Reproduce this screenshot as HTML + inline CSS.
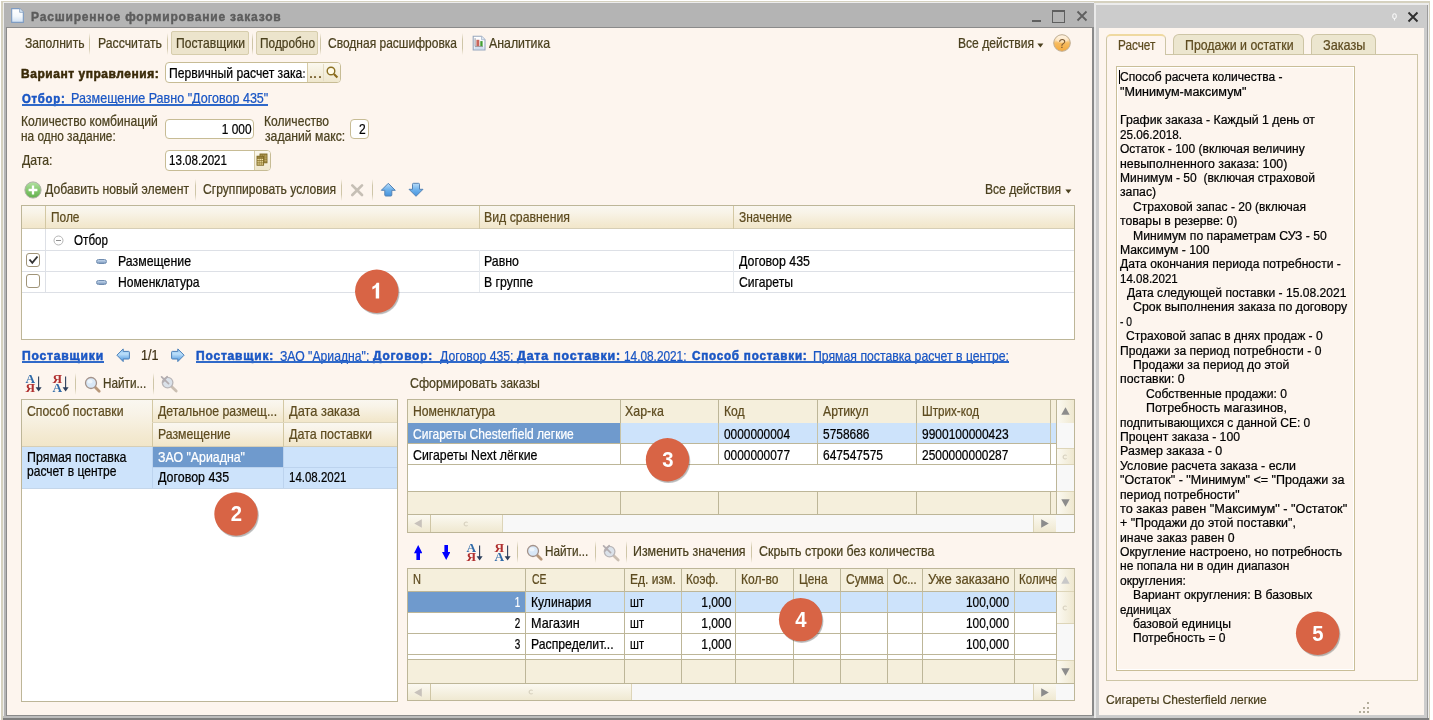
<!DOCTYPE html>
<html><head><meta charset="utf-8"><title>1C</title><style>
html,body{margin:0;padding:0;}
body{width:1433px;height:720px;position:relative;overflow:hidden;background:#fff;font-family:"Liberation Sans",sans-serif;font-size:13px;}
div,span,svg{position:absolute;box-sizing:border-box;}
span{white-space:pre;-webkit-text-stroke:0.22px currentColor;}
</style></head><body>
<div style="left:0;top:0;width:1433px;height:720px;will-change:transform;overflow:hidden">
<div style="left:0px;top:0px;width:1433px;height:720px;background:#fff"></div>
<div style="left:1px;top:1px;width:1429px;height:719px;background:#d5d1bf"></div>
<div style="left:3px;top:2px;width:1091px;height:718px;background:#ececec"></div>
<div style="left:1094px;top:3px;width:334.5px;height:717px;background:#ececec"></div>
<div style="left:4px;top:3px;width:1090px;height:715px;background:#b4b4b4"></div>
<div style="left:1094px;top:3px;width:2px;height:715px;background:#e9e9e9"></div>
<div style="left:1096px;top:5px;width:331.2px;height:713px;background:#cccccc"></div>
<div style="left:1427.2px;top:5px;width:1.3px;height:713px;background:#9c9c9c"></div>
<div style="left:3px;top:718px;width:1425.5px;height:2px;background:#7f7f7f"></div>
<div style="left:3px;top:716px;width:1091px;height:2px;background:#bdbdbd"></div>
<div style="left:6px;top:27px;width:1088px;height:689px;background:#8a8a8a"></div>
<div style="left:7px;top:28px;width:1085px;height:687px;background:#fdf5ee"></div>
<div style="left:1099px;top:28px;width:325px;height:687px;background:#fdf5ee"></div>
<svg style="left:9.7px;top:7px" width="15" height="17" viewBox="0 0 14 16">
<defs><linearGradient id="dg" x1="0" y1="0" x2="0" y2="1"><stop offset="0" stop-color="#ffffff"/><stop offset="0.55" stop-color="#f4f8fc"/><stop offset="1" stop-color="#cfe0f3"/></linearGradient></defs>
<path d="M1.5 1.5 H9 L12.5 5 V14.5 H1.5 Z" fill="url(#dg)" stroke="#7f9cc2" stroke-width="1.1"/>
<path d="M9 1.5 V5 H12.5" fill="#dbe8f6" stroke="#8aa5c4" stroke-width="0.8"/>
</svg>
<span style="top:10.03px;font-size:12px;line-height:15px;color:#5c5c5c;font-weight:bold;letter-spacing:0.8px;left:31px;transform:scale(1.0021,1.05);transform-origin:0 11.47px;-webkit-text-stroke:0.4px currentColor;">Расширенное формирование заказов</span>
<div style="left:1032px;top:20px;width:9px;height:2px;background:#5f5f5f"></div>
<div style="left:1052px;top:10px;width:13px;height:13px;border:1px solid #5f5f5f;border-top-width:2px"></div>
<svg style="left:1076px;top:10px" width="12" height="12" viewBox="0 0 12 12"><path d="M1.5 1.5 L10.5 10.5 M10.5 1.5 L1.5 10.5" stroke="#5f5f5f" stroke-width="1.8" fill="none"/></svg>
<svg style="left:1391.5px;top:12.5px" width="5" height="8.4" viewBox="0 0 6 10"><rect x="1" y="1" width="4" height="5.5" rx="1.5" fill="none" stroke="#fff" stroke-width="1.2"/><path d="M3 7 V9" stroke="#fff" stroke-width="1"/></svg>
<svg style="left:1407px;top:11px" width="12" height="12" viewBox="0 0 12 12"><path d="M1.5 1.5 L10.5 10.5 M10.5 1.5 L1.5 10.5" stroke="#2f2f2f" stroke-width="1.9" fill="none"/></svg>
<span style="top:35.9px;font-size:13px;line-height:16px;color:#4b411f;left:24.5px;transform:scale(0.9322,1.09);transform-origin:0 12.3px;">Заполнить</span>
<div style="left:89px;top:33px;width:1px;height:22px;background:linear-gradient(rgba(207,198,168,0),#cfc6a8 30%,#cfc6a8 70%,rgba(207,198,168,0))"></div>
<span style="top:35.9px;font-size:13px;line-height:16px;color:#4b411f;left:97.5px;transform:scale(0.9433,1.09);transform-origin:0 12.3px;">Рассчитать</span>
<div style="left:167px;top:33px;width:1px;height:22px;background:linear-gradient(rgba(207,198,168,0),#cfc6a8 30%,#cfc6a8 70%,rgba(207,198,168,0))"></div>
<div style="left:171px;top:31px;width:78px;height:24px;background:#ece4cc;border:1px solid #d6cdac;border-radius:2px"></div>
<span style="top:35.9px;font-size:13px;line-height:16px;color:#4b411f;left:176px;transform:scale(0.9332,1.09);transform-origin:0 12.3px;">Поставщики</span>
<div style="left:252px;top:33px;width:1px;height:22px;background:linear-gradient(rgba(207,198,168,0),#cfc6a8 30%,#cfc6a8 70%,rgba(207,198,168,0))"></div>
<div style="left:255.6px;top:31px;width:62.2px;height:24px;background:#ece4cc;border:1px solid #d6cdac;border-radius:2px"></div>
<span style="top:35.9px;font-size:13px;line-height:16px;color:#4b411f;left:260px;transform:scale(0.9136,1.09);transform-origin:0 12.3px;">Подробно</span>
<div style="left:320px;top:33px;width:1px;height:22px;background:linear-gradient(rgba(207,198,168,0),#cfc6a8 30%,#cfc6a8 70%,rgba(207,198,168,0))"></div>
<span style="top:35.9px;font-size:13px;line-height:16px;color:#4b411f;left:328px;transform:scale(0.9237,1.09);transform-origin:0 12.3px;">Сводная расшифровка</span>
<div style="left:462.3px;top:33px;width:1px;height:22px;background:linear-gradient(rgba(207,198,168,0),#cfc6a8 30%,#cfc6a8 70%,rgba(207,198,168,0))"></div>
<svg style="left:471.5px;top:35.3px" width="14" height="16" viewBox="0 0 14 16">
<defs><linearGradient id="ag" x1="0" y1="0" x2="0" y2="1"><stop offset="0" stop-color="#ffffff"/><stop offset="0.7" stop-color="#f3f7fc"/><stop offset="1" stop-color="#d6e3f3"/></linearGradient></defs>
<path d="M1.2 1.2 H9.5 L13 4.7 V15 H1.2 Z" fill="url(#ag)" stroke="#98a7bd" stroke-width="1.1"/>
<path d="M9.5 1.2 V4.7 H13" fill="#dfe8f4" stroke="#a9b7cb" stroke-width="0.8"/>
<path d="M3.1 3.2 V11.4 H11" fill="none" stroke="#8d8d95" stroke-width="0.9"/>
<rect x="4.4" y="4.8" width="2.9" height="6.3" fill="#c9665c"/>
<rect x="8.3" y="6.1" width="2.3" height="5" fill="#42a030"/>
<path d="M3 13 H11.5" stroke="#bfd0e6" stroke-width="1"/></svg>
<span style="top:35.9px;font-size:13px;line-height:16px;color:#4b411f;left:489px;transform:scale(0.9478,1.09);transform-origin:0 12.3px;">Аналитика</span>
<span style="top:35.9px;font-size:13px;line-height:16px;color:#4b411f;left:957.5px;transform:scale(0.9295,1.09);transform-origin:0 12.3px;">Все действия</span>
<svg style="left:1037.3px;top:42.6px" width="7" height="5" viewBox="0 0 7 5"><path d="M0.4 0.4 H6.4 L3.4 4.4 Z" fill="#4b411f"/></svg>
<svg style="left:1052.2px;top:33.1px" width="20" height="20" viewBox="0 0 20 20">
<defs><linearGradient id="hg" x1="0" y1="0" x2="0" y2="1"><stop offset="0" stop-color="#fff0dc"/><stop offset="0.35" stop-color="#fbd9a4"/><stop offset="0.5" stop-color="#f7bc60"/><stop offset="1" stop-color="#f3a93e"/></linearGradient></defs>
<circle cx="10" cy="10" r="8.3" fill="url(#hg)" stroke="#bfae94" stroke-width="1"/>
<ellipse cx="10" cy="6.3" rx="5.8" ry="3.6" fill="#fff" opacity="0.35"/>
<text x="10" y="14.6" font-family="Liberation Sans" font-size="13" text-anchor="middle" fill="#7d5a32">?</text></svg>
<span style="top:66.93px;font-size:12px;line-height:15px;color:#3a2a08;font-weight:bold;letter-spacing:0.55px;left:21px;transform:scale(0.9982,1.03);transform-origin:0 11.47px;-webkit-text-stroke:0.5px currentColor;">Вариант управления:</span>
<div style="left:165px;top:62.4px;width:176px;height:20.4px;background:#fff;border:1px solid #c7bc95;border-radius:4px"></div>
<span style="top:66.2px;font-size:13px;line-height:16px;color:#000;left:168.7px;transform:scale(0.9354,1.09);transform-origin:0 12.3px;">Первичный расчет зака</span>
<div style="left:303.3px;top:71px;width:1.6px;height:1.8px;background:#8a8a8a"></div>
<div style="left:303.3px;top:75.8px;width:1.6px;height:2px;background:#8a8a8a"></div>
<div style="left:307px;top:63.4px;width:33px;height:18.4px;background:linear-gradient(#fbf8ee,#efe7cd);border-left:1px solid #d6cba6;border-radius:0 3px 3px 0"></div>
<div style="left:309.8px;top:76.3px;width:2.2px;height:2.2px;background:#7d6636;border-radius:0.6px"></div>
<div style="left:314.3px;top:76.3px;width:2.2px;height:2.2px;background:#7d6636;border-radius:0.6px"></div>
<div style="left:318.8px;top:76.3px;width:2.2px;height:2.2px;background:#7d6636;border-radius:0.6px"></div>
<div style="left:323.3px;top:64px;width:1px;height:17px;background:#e4dcc4"></div>
<svg style="left:325px;top:65px" width="15" height="15" viewBox="0 0 15 15"><circle cx="6" cy="6" r="3.8" fill="#fffbe8" stroke="#8a6f22" stroke-width="1.4"/><path d="M8.9 8.9 L12.4 12.4" stroke="#8a6a1c" stroke-width="2.1"/></svg>
<span style="top:91.53px;font-size:12px;line-height:15px;color:#1a56c4;font-weight:bold;letter-spacing:0.8px;left:22px;transform:scale(0.9437,1.03);transform-origin:0 11.47px;-webkit-text-stroke:0.5px currentColor;">Отбор:</span>
<span style="top:90.8px;font-size:13px;line-height:16px;color:#1a56c4;left:70.7px;transform:scale(0.9646,1.09);transform-origin:0 12.3px;">Размещение Равно "Договор 435"</span>
<div style="left:21.5px;top:104.1px;width:246.5px;height:1.5px;background:#2f69c9"></div>
<span style="top:114.4px;font-size:13px;line-height:16px;color:#4b411f;left:21px;transform:scale(0.9339,1.09);transform-origin:0 12.3px;">Количество комбинаций</span>
<span style="top:128.6px;font-size:13px;line-height:16px;color:#4b411f;left:21px;transform:scale(0.9117,1.09);transform-origin:0 12.3px;">на одно задание:</span>
<div style="left:165px;top:119.3px;width:89px;height:20px;background:#fff;border:1px solid #c7bc95;border-radius:4px"></div>
<span style="top:122.3px;font-size:13px;line-height:16px;color:#000;right:1181.2px;transform:scale(0.9156,1.09);transform-origin:100% 12.3px;">1 000</span>
<span style="top:114.4px;font-size:13px;line-height:16px;color:#4b411f;left:264.2px;transform:scale(0.9311,1.09);transform-origin:0 12.3px;">Количество</span>
<span style="top:128.7px;font-size:13px;line-height:16px;color:#4b411f;left:264.6px;transform:scale(0.9387,1.09);transform-origin:0 12.3px;">заданий макс:</span>
<div style="left:350px;top:119.3px;width:18.5px;height:20px;background:#fff;border:1px solid #c7bc95;border-radius:4px"></div>
<span style="top:122.3px;font-size:13px;line-height:16px;color:#000;left:359.3px;transform:scale(0.9261,1.09);transform-origin:0 12.3px;">2</span>
<span style="top:153.4px;font-size:13px;line-height:16px;color:#4b411f;left:21.5px;transform:scale(0.9412,1.09);transform-origin:0 12.3px;">Дата:</span>
<div style="left:165px;top:150.3px;width:105.5px;height:20.4px;background:#fff;border:1px solid #c7bc95;border-radius:4px"></div>
<span style="top:153.3px;font-size:13px;line-height:16px;color:#000;left:168.7px;transform:scale(0.8912,1.09);transform-origin:0 12.3px;">13.08.2021</span>
<div style="left:254px;top:151.3px;width:15.5px;height:18.4px;background:linear-gradient(#fbf8ee,#efe7cd);border-left:1px solid #d6cba6;border-radius:0 3px 3px 0"></div>
<svg style="left:256.2px;top:153px" width="12" height="13" viewBox="0 0 12 13">
<rect x="4" y="1" width="7" height="8.8" fill="#a8924e" stroke="#7d671f" stroke-width="0.9"/>
<path d="M4.5 3 H10.5 M4.5 5.2 H10.5 M4.5 7.4 H10.5" stroke="#c9b66e" stroke-width="0.9"/>
<path d="M6.4 1.3 V9.5 M8.7 1.3 V9.5" stroke="#8d7730" stroke-width="0.7"/>
<rect x="1" y="3.2" width="6.6" height="9" fill="#9c8540" stroke="#7d671f" stroke-width="0.9"/>
<path d="M1.5 6.6 H7.1 M1.5 8.8 H7.1 M1.5 11 H7.1" stroke="#fff3b8" stroke-width="1"/>
<path d="M3.2 3.6 V12 M5.4 3.6 V12" stroke="#8d7730" stroke-width="0.6"/></svg>
<svg style="left:23.5px;top:180.8px" width="18" height="18" viewBox="0 0 18 18">
<defs><linearGradient id="gg" x1="0" y1="0" x2="0" y2="1"><stop offset="0" stop-color="#b4e2a4"/><stop offset="0.5" stop-color="#86c870"/><stop offset="1" stop-color="#62b04c"/></linearGradient></defs>
<circle cx="9" cy="9" r="8.1" fill="url(#gg)" stroke="#aeb0a6" stroke-width="1"/>
<path d="M9 4.6 V13.4 M4.6 9 H13.4" stroke="#fff" stroke-width="2.3"/></svg>
<span style="top:182.0px;font-size:13px;line-height:16px;color:#4b411f;left:45px;transform:scale(0.9408,1.09);transform-origin:0 12.3px;">Добавить новый элемент</span>
<div style="left:195px;top:179px;width:1px;height:22px;background:linear-gradient(rgba(207,198,168,0),#cfc6a8 30%,#cfc6a8 70%,rgba(207,198,168,0))"></div>
<span style="top:182.0px;font-size:13px;line-height:16px;color:#4b411f;left:203px;transform:scale(0.9327,1.09);transform-origin:0 12.3px;">Сгруппировать условия</span>
<div style="left:341px;top:179px;width:1px;height:22px;background:linear-gradient(rgba(207,198,168,0),#cfc6a8 30%,#cfc6a8 70%,rgba(207,198,168,0))"></div>
<svg style="left:350px;top:183px" width="15" height="15" viewBox="0 0 15 15"><path d="M2.3 2.4 L12 12 M12 2.4 L2.3 12" stroke="#c6bfb5" stroke-width="2.7" stroke-linecap="round"/></svg>
<div style="left:372px;top:179px;width:1px;height:22px;background:linear-gradient(rgba(207,198,168,0),#cfc6a8 30%,#cfc6a8 70%,rgba(207,198,168,0))"></div>
<svg style="left:380px;top:182px" width="17" height="16" viewBox="0 0 17 16"><defs><linearGradient id="ab" x1="0" y1="0" x2="0" y2="1"><stop offset="0" stop-color="#b9dcf8"/><stop offset="0.5" stop-color="#6eb2ec"/><stop offset="1" stop-color="#4592dc"/></linearGradient></defs>
<path d="M8.3 1.3 L15.3 8.3 H11.8 V13 Q11.8 14 10.8 14 H5.8 Q4.8 14 4.8 13 V8.3 H1.3 Z" fill="url(#ab)" stroke="#5583b4" stroke-width="1" stroke-linejoin="round"/></svg>
<svg style="left:408px;top:182px" width="17" height="16" viewBox="0 0 17 16">
<path d="M8 14.3 L15 7.3 H11.5 V2.3 Q11.5 1.3 10.5 1.3 H5.5 Q4.5 1.3 4.5 2.3 V7.3 H1 Z" fill="url(#ab)" stroke="#5583b4" stroke-width="1" stroke-linejoin="round"/></svg>
<span style="top:182.0px;font-size:13px;line-height:16px;color:#4b411f;left:985.3px;transform:scale(0.9295,1.09);transform-origin:0 12.3px;">Все действия</span>
<svg style="left:1065.3px;top:188.7px" width="7" height="5" viewBox="0 0 7 5"><path d="M0.4 0.4 H6.4 L3.4 4.4 Z" fill="#4b411f"/></svg>
<div style="left:21px;top:205px;width:1053.5px;height:135px;background:#fff;border:1px solid #bdb698"></div>
<div style="left:22px;top:206px;width:1051.5px;height:22.5px;background:linear-gradient(#faf7f0 0%,#f8f3e7 30%,#f3e9d0 80%,#f1e6c9 100%)"></div>
<div style="left:22px;top:228.3px;width:1051.5px;height:1px;background:#d6ceb6"></div>
<div style="left:45px;top:206px;width:1px;height:22.5px;background:#d3c8a3"></div>
<div style="left:479px;top:206px;width:1px;height:22.5px;background:#d3c8a3"></div>
<div style="left:733px;top:206px;width:1px;height:22.5px;background:#d3c8a3"></div>
<span style="top:210.0px;font-size:13px;line-height:16px;color:#5e4c20;left:50.8px;transform:scale(0.9161,1.09);transform-origin:0 12.3px;">Поле</span>
<span style="top:210.0px;font-size:13px;line-height:16px;color:#5e4c20;left:484px;transform:scale(0.9462,1.09);transform-origin:0 12.3px;">Вид сравнения</span>
<span style="top:210.0px;font-size:13px;line-height:16px;color:#5e4c20;left:739px;transform:scale(0.9192,1.09);transform-origin:0 12.3px;">Значение</span>
<div style="left:22px;top:249.6px;width:1051.5px;height:1px;background:#dde0e6"></div>
<div style="left:22px;top:270.7px;width:1051.5px;height:1px;background:#dde0e6"></div>
<div style="left:22px;top:291.8px;width:1051.5px;height:1px;background:#dde0e6"></div>
<div style="left:45px;top:229px;width:1px;height:63px;background:#dde0e6"></div>
<div style="left:479px;top:250px;width:1px;height:42px;background:#e6eaee"></div>
<div style="left:733px;top:250px;width:1px;height:42px;background:#e6eaee"></div>
<svg style="left:53px;top:234.7px" width="11" height="11" viewBox="0 0 11 11"><circle cx="5.5" cy="5.5" r="4.5" fill="#fff" stroke="#b5b5b5"/><path d="M3 5.5 H8" stroke="#8e8e8e" stroke-width="1"/></svg>
<span style="top:233.1px;font-size:13px;line-height:16px;color:#000;left:74.3px;transform:scale(0.8951,1.09);transform-origin:0 12.3px;">Отбор</span>
<div style="left:26.2px;top:253.4px;width:14.2px;height:13.5px;background:#fff;border:1px solid #a09478;border-radius:3px"></div>
<svg style="left:28px;top:255px" width="11" height="10" viewBox="0 0 11 10"><path d="M1.5 4.5 L4.3 7.8 L9.5 1.5" stroke="#333" stroke-width="1.9" fill="none"/></svg>
<div style="left:26.2px;top:274.4px;width:14.2px;height:13.5px;background:#fff;border:1px solid #a09478;border-radius:3px"></div>
<div style="left:95.8px;top:258.8px;width:11.4px;height:5.6px;background:linear-gradient(#bdd0e8,#a9c0dc 45%,#7d9abd);border:1px solid #6f8cb0;border-radius:2.5px"></div>
<div style="left:95.8px;top:279.9px;width:11.4px;height:5.6px;background:linear-gradient(#bdd0e8,#a9c0dc 45%,#7d9abd);border:1px solid #6f8cb0;border-radius:2.5px"></div>
<span style="top:254.0px;font-size:13px;line-height:16px;color:#000;left:117.9px;transform:scale(0.9492,1.09);transform-origin:0 12.3px;">Размещение</span>
<span style="top:275.1px;font-size:13px;line-height:16px;color:#000;left:117.9px;transform:scale(0.9341,1.09);transform-origin:0 12.3px;">Номенклатура</span>
<span style="top:254.0px;font-size:13px;line-height:16px;color:#000;left:484px;transform:scale(0.9512,1.09);transform-origin:0 12.3px;">Равно</span>
<span style="top:275.1px;font-size:13px;line-height:16px;color:#000;left:484px;transform:scale(0.9437,1.09);transform-origin:0 12.3px;">В группе</span>
<span style="top:254.0px;font-size:13px;line-height:16px;color:#000;left:739px;transform:scale(0.9544,1.09);transform-origin:0 12.3px;">Договор 435</span>
<span style="top:275.1px;font-size:13px;line-height:16px;color:#000;left:739px;transform:scale(0.9363,1.09);transform-origin:0 12.3px;">Сигареты</span>
<span style="top:349.03px;font-size:12px;line-height:15px;color:#1a56c4;font-weight:bold;letter-spacing:0.8px;left:21.5px;transform:scale(1.0086,1.03);transform-origin:0 11.47px;-webkit-text-stroke:0.5px currentColor;">Поставщики</span>
<div style="left:21.5px;top:361.4px;width:82.5px;height:1.4px;background:#2f69c9"></div>
<svg style="left:115.5px;top:348px" width="15" height="15" viewBox="0 0 15 15"><defs><linearGradient id="lb" x1="0" y1="0" x2="0" y2="1"><stop offset="0" stop-color="#8cc4f4"/><stop offset="0.4" stop-color="#bcdffa"/><stop offset="1" stop-color="#4490dc"/></linearGradient></defs>
<path d="M0.9 7.2 L7.2 0.9 V3.4 H12.6 Q13.4 3.4 13.4 4.2 V10.2 Q13.4 11 12.6 11 H7.2 V13.6 Z" fill="url(#lb)" stroke="#4a7fb8" stroke-width="1" stroke-linejoin="round"/></svg>
<span style="top:348.2px;font-size:13px;line-height:16px;color:#3e3014;left:141px;transform:scale(0.968,1.09);transform-origin:0 12.3px;">1/1</span>
<svg style="left:169.5px;top:348px" width="15" height="15" viewBox="0 0 15 15">
<path d="M14.1 7.2 L7.8 0.9 V3.4 H2.4 Q1.6 3.4 1.6 4.2 V10.2 Q1.6 11 2.4 11 H7.8 V13.6 Z" fill="url(#lb)" stroke="#4a7fb8" stroke-width="1" stroke-linejoin="round"/></svg>
<span style="top:349.03px;font-size:12px;line-height:15px;color:#1a56c4;font-weight:bold;letter-spacing:0.8px;left:196px;transform:scale(1.0012,1.03);transform-origin:0 11.47px;-webkit-text-stroke:0.5px currentColor;">Поставщик:</span>
<span style="top:348.7px;font-size:13px;line-height:16px;color:#1a56c4;left:280px;transform:scale(0.938,1.09);transform-origin:0 12.3px;">ЗАО "Ариадна";</span>
<span style="top:349.03px;font-size:12px;line-height:15px;color:#1a56c4;font-weight:bold;letter-spacing:0.8px;left:373px;transform:scale(0.992,1.03);transform-origin:0 11.47px;-webkit-text-stroke:0.5px currentColor;">Договор:</span>
<span style="top:348.7px;font-size:13px;line-height:16px;color:#1a56c4;left:439.5px;transform:scale(0.9423,1.09);transform-origin:0 12.3px;">Договор 435;</span>
<span style="top:349.03px;font-size:12px;line-height:15px;color:#1a56c4;font-weight:bold;letter-spacing:0.8px;left:517px;transform:scale(1.0326,1.03);transform-origin:0 11.47px;-webkit-text-stroke:0.5px currentColor;">Дата поставки:</span>
<span style="top:348.7px;font-size:13px;line-height:16px;color:#1a56c4;left:624px;transform:scale(0.9099,1.09);transform-origin:0 12.3px;">14.08.2021;</span>
<span style="top:349.03px;font-size:12px;line-height:15px;color:#1a56c4;font-weight:bold;letter-spacing:0.8px;left:691.5px;transform:scale(0.9702,1.03);transform-origin:0 11.47px;-webkit-text-stroke:0.5px currentColor;">Способ поставки:</span>
<span style="top:348.7px;font-size:13px;line-height:16px;color:#1a56c4;left:813px;transform:scale(0.9422,1.09);transform-origin:0 12.3px;">Прямая поставка расчет в центре;</span>
<div style="left:196px;top:361.4px;width:813px;height:1.4px;background:#2f69c9"></div>
<svg style="left:24.5px;top:374.3px" width="19" height="20" viewBox="0 0 19 20">
<text x="0.4" y="9.2" font-family="Liberation Serif" font-weight="bold" font-size="12.6" textLength="9.6" lengthAdjust="spacingAndGlyphs" fill="#2f6aa8">А</text>
<text x="0.4" y="18.3" font-family="Liberation Serif" font-weight="bold" font-size="12.6" textLength="9.6" lengthAdjust="spacingAndGlyphs" fill="#b03030">Я</text>
<path d="M13.6 2.6 V14" stroke="#2d3f5c" stroke-width="1.1"/><path d="M10.6 13.2 H16.6 L13.6 17.4 Z" fill="#2d3f5c"/></svg>
<svg style="left:52px;top:374.3px" width="19" height="20" viewBox="0 0 19 20">
<text x="0.4" y="9.2" font-family="Liberation Serif" font-weight="bold" font-size="12.6" textLength="9.6" lengthAdjust="spacingAndGlyphs" fill="#b03030">Я</text>
<text x="0.4" y="18.3" font-family="Liberation Serif" font-weight="bold" font-size="12.6" textLength="9.6" lengthAdjust="spacingAndGlyphs" fill="#2f6aa8">А</text>
<path d="M13.6 2.6 V14" stroke="#2d3f5c" stroke-width="1.1"/><path d="M10.6 13.2 H16.6 L13.6 17.4 Z" fill="#2d3f5c"/></svg>
<div style="left:75px;top:373px;width:1px;height:22px;background:linear-gradient(rgba(207,198,168,0),#cfc6a8 30%,#cfc6a8 70%,rgba(207,198,168,0))"></div>
<svg style="left:84px;top:375.6px" width="18" height="18" viewBox="0 0 18 18">
<path d="M11 11 L15.2 15.2" stroke="#b8987a" stroke-width="2.8" stroke-linecap="round"/>
<circle cx="7" cy="7" r="5.5" fill="#d9e8f7" stroke="#a3928a" stroke-width="1.3"/>
<ellipse cx="6" cy="5.5" rx="2.6" ry="2" fill="#fff" opacity="0.55"/></svg>
<span style="top:376.1px;font-size:13px;line-height:16px;color:#4b411f;left:103px;transform:scale(0.9053,1.09);transform-origin:0 12.3px;">Найти...</span>
<div style="left:153px;top:373px;width:1px;height:22px;background:linear-gradient(rgba(207,198,168,0),#cfc6a8 30%,#cfc6a8 70%,rgba(207,198,168,0))"></div>
<svg style="left:160.4px;top:375.2px" width="19" height="18" viewBox="0 0 19 18">
<path d="M11.5 11.5 L16.2 16" stroke="#cbbfb2" stroke-width="2.8" stroke-linecap="round"/>
<circle cx="7.6" cy="7.6" r="5.3" fill="#dbe2ea" stroke="#b9b6b8" stroke-width="1.3"/>
<path d="M1.6 1.8 L8.6 8.6 M7.2 1.6 L3 7" stroke="#b3adb0" stroke-width="1.7" stroke-linecap="round"/></svg>
<span style="top:376.1px;font-size:13px;line-height:16px;color:#4b411f;left:410.3px;transform:scale(0.9502,1.09);transform-origin:0 12.3px;">Сформировать заказы</span>
<div style="left:21px;top:399px;width:377px;height:302.5px;background:#fff;border:1px solid #bdb698"></div>
<div style="left:22px;top:400px;width:129.5px;height:46px;background:linear-gradient(#faf7f0 0%,#f8f3e7 30%,#f3e9d0 80%,#f1e6c9 100%)"></div>
<div style="left:152px;top:400px;width:245px;height:22.5px;background:linear-gradient(#faf7f0 0%,#f8f3e7 30%,#f3e9d0 80%,#f1e6c9 100%)"></div>
<div style="left:152px;top:422.5px;width:245px;height:23.5px;background:linear-gradient(#faf7f0 0%,#f8f3e7 30%,#f3e9d0 80%,#f1e6c9 100%)"></div>
<div style="left:22px;top:445.8px;width:375px;height:1px;background:#d6ceb6"></div>
<div style="left:151.5px;top:400px;width:1px;height:88px;background:#d3c8a3"></div>
<div style="left:282.5px;top:400px;width:1px;height:88px;background:#d3c8a3"></div>
<div style="left:152px;top:422.2px;width:245px;height:1px;background:#ded6bd"></div>
<span style="top:404.4px;font-size:13px;line-height:16px;color:#5e4c20;left:26.5px;transform:scale(0.9436,1.09);transform-origin:0 12.3px;">Способ поставки</span>
<span style="top:404.4px;font-size:13px;line-height:16px;color:#5e4c20;left:157.8px;transform:scale(0.9443,1.09);transform-origin:0 12.3px;">Детальное размещ...</span>
<span style="top:404.4px;font-size:13px;line-height:16px;color:#5e4c20;left:289px;transform:scale(0.9883,1.09);transform-origin:0 12.3px;">Дата заказа</span>
<span style="top:427.2px;font-size:13px;line-height:16px;color:#5e4c20;left:157.8px;transform:scale(0.944,1.09);transform-origin:0 12.3px;">Размещение</span>
<span style="top:427.2px;font-size:13px;line-height:16px;color:#5e4c20;left:289px;transform:scale(0.9644,1.09);transform-origin:0 12.3px;">Дата поставки</span>
<div style="left:22px;top:446.5px;width:375px;height:41.5px;background:#cde3fb"></div>
<div style="left:152.5px;top:446.5px;width:130px;height:20.3px;background:#6f9acd"></div>
<div style="left:152.5px;top:466.8px;width:244.5px;height:1px;background:#bcd3ee"></div>
<div style="left:151.5px;top:446.5px;width:1px;height:41.5px;background:#bcd3ee"></div>
<div style="left:282.5px;top:446.5px;width:1px;height:41.5px;background:#bcd3ee"></div>
<div style="left:22px;top:488px;width:375px;height:1px;background:#c4d6ea"></div>
<span style="top:450.4px;font-size:13px;line-height:16px;color:#000;left:26.5px;transform:scale(0.9549,1.09);transform-origin:0 12.3px;">Прямая поставка</span>
<span style="top:464.4px;font-size:13px;line-height:16px;color:#000;left:26.5px;transform:scale(0.9266,1.09);transform-origin:0 12.3px;">расчет в центре</span>
<span style="top:450.4px;font-size:13px;line-height:16px;color:#fff;left:157.8px;transform:scale(0.95,1.09);transform-origin:0 12.3px;">ЗАО "Ариадна"</span>
<span style="top:470.4px;font-size:13px;line-height:16px;color:#000;left:157.8px;transform:scale(0.9571,1.09);transform-origin:0 12.3px;">Договор 435</span>
<span style="top:470.4px;font-size:13px;line-height:16px;color:#000;left:289px;transform:scale(0.882,1.09);transform-origin:0 12.3px;">14.08.2021</span>
<div style="left:406.5px;top:399.2px;width:668px;height:134px;background:#fff;border:1px solid #bdb698"></div>
<div style="left:407.5px;top:400.2px;width:649px;height:22.8px;background:#f5efdc"></div>
<div style="left:407.5px;top:422.6px;width:649px;height:1px;background:#bdb698"></div>
<div style="left:620.2px;top:400.2px;width:1px;height:65px;background:#bdb698"></div>
<div style="left:717.8px;top:400.2px;width:1px;height:65px;background:#bdb698"></div>
<div style="left:817.2px;top:400.2px;width:1px;height:65px;background:#bdb698"></div>
<div style="left:916.2px;top:400.2px;width:1px;height:65px;background:#bdb698"></div>
<div style="left:1050px;top:400.2px;width:1px;height:65px;background:#bdb698"></div>
<div style="left:407.5px;top:423.4px;width:649px;height:20.3px;background:#cde3fb"></div>
<div style="left:407.5px;top:423.4px;width:213px;height:20.3px;background:#6f9acd"></div>
<div style="left:620.2px;top:423.4px;width:1px;height:20.3px;background:#c7c3a6"></div>
<div style="left:717.8px;top:423.4px;width:1px;height:20.3px;background:#c7c3a6"></div>
<div style="left:817.2px;top:423.4px;width:1px;height:20.3px;background:#c7c3a6"></div>
<div style="left:916.2px;top:423.4px;width:1px;height:20.3px;background:#c7c3a6"></div>
<div style="left:1050px;top:423.4px;width:1px;height:20.3px;background:#c7c3a6"></div>
<div style="left:407.5px;top:443.2px;width:649px;height:1px;background:#bdb698"></div>
<div style="left:407.5px;top:464.3px;width:649px;height:1px;background:#bdb698"></div>
<div style="left:407.5px;top:491.2px;width:649px;height:22.8px;background:#f5efdc"></div>
<div style="left:407.5px;top:490.8px;width:649px;height:1px;background:#bdb698"></div>
<div style="left:620.2px;top:491.2px;width:1px;height:22.6px;background:#bdb698"></div>
<div style="left:717.8px;top:491.2px;width:1px;height:22.6px;background:#bdb698"></div>
<div style="left:817.2px;top:491.2px;width:1px;height:22.6px;background:#bdb698"></div>
<div style="left:916.2px;top:491.2px;width:1px;height:22.6px;background:#bdb698"></div>
<div style="left:1050px;top:491.2px;width:1px;height:22.6px;background:#bdb698"></div>
<div style="left:1056px;top:400.2px;width:1px;height:132px;background:#bdb698"></div>
<div style="left:1057px;top:400.2px;width:16.5px;height:113.6px;background:#f8f8f8"></div>
<div style="left:1057px;top:400.2px;width:16.5px;height:22.6px;background:linear-gradient(90deg,#fbf9f1,#efe8d0);"></div>
<svg style="left:1060.7px;top:407px" width="9" height="8" viewBox="0 0 9 8"><polygon points="0.3,7.8 8.7,7.8 4.5,0.2" fill="#8c8c8c"/></svg>
<div style="left:1057px;top:447.6px;width:16.5px;height:17.4px;background:linear-gradient(90deg,#fbf9f1,#efe8d0);border-top:1px solid #ddd5b8;border-bottom:1px solid #ddd5b8"></div>
<svg style="left:1062px;top:453.5px" width="6" height="6" viewBox="0 0 6 6"><path d="M4.6 1.6 A2 2 0 1 0 4.6 4.4" fill="none" stroke="#d8d2c0" stroke-width="1.2"/></svg>
<div style="left:1057px;top:491.2px;width:16.5px;height:22.6px;background:linear-gradient(90deg,#fbf9f1,#efe8d0);border-top:1px solid #ddd5b8"></div>
<svg style="left:1060.7px;top:499.4px" width="9" height="8" viewBox="0 0 9 8"><polygon points="0.3,0.2 8.7,0.2 4.5,7.8" fill="#8c8c8c"/></svg>
<div style="left:407.5px;top:515px;width:649px;height:17.4px;background:#f8f8f8"></div>
<div style="left:407.5px;top:515px;width:23.5px;height:17.4px;background:linear-gradient(#fbf9f1,#efe8d0);border-right:1px solid #cfc6a5"></div>
<svg style="left:414px;top:519px" width="8" height="9" viewBox="0 0 8 9"><polygon points="7.8,0.3 7.8,8.7 0.2,4.5" fill="#c8c2bb"/></svg>
<div style="left:431px;top:515px;width:71.5px;height:17.4px;background:linear-gradient(#fbf9f1,#efe8d0);border-right:1px solid #ddd5b8"></div>
<svg style="left:463px;top:520.5px" width="6" height="6" viewBox="0 0 6 6"><path d="M4.6 1.6 A2 2 0 1 0 4.6 4.4" fill="none" stroke="#d8d2c0" stroke-width="1.2"/></svg>
<div style="left:1033px;top:515px;width:23px;height:17.4px;background:linear-gradient(#fbf9f1,#efe8d0);border-left:1px solid #ddd5b8"></div>
<svg style="left:1041px;top:519px" width="8" height="9" viewBox="0 0 8 9"><polygon points="0.2,0.3 0.2,8.7 7.8,4.5" fill="#8c8c8c"/></svg>
<div style="left:1057px;top:515px;width:16.5px;height:17.4px;background:#f8f8f8"></div>
<div style="left:407.5px;top:514px;width:666px;height:1px;background:#bdb698"></div>
<div style="left:406.5px;top:399.2px;width:668px;height:134px;border:1px solid #bdb698"></div>
<span style="top:404.1px;font-size:13px;line-height:16px;color:#5e4c20;left:412.6px;transform:scale(0.9398,1.09);transform-origin:0 12.3px;">Номенклатура</span>
<span style="top:404.1px;font-size:13px;line-height:16px;color:#5e4c20;left:624.6px;transform:scale(0.954,1.09);transform-origin:0 12.3px;">Хар-ка</span>
<span style="top:404.1px;font-size:13px;line-height:16px;color:#5e4c20;left:724px;transform:scale(0.9363,1.09);transform-origin:0 12.3px;">Код</span>
<span style="top:404.1px;font-size:13px;line-height:16px;color:#5e4c20;left:823px;transform:scale(0.9408,1.09);transform-origin:0 12.3px;">Артикул</span>
<span style="top:404.1px;font-size:13px;line-height:16px;color:#5e4c20;left:921.7px;transform:scale(0.8968,1.09);transform-origin:0 12.3px;">Штрих-код</span>
<span style="top:426.7px;font-size:13px;line-height:16px;color:#fff;left:412.6px;transform:scale(0.9241,1.09);transform-origin:0 12.3px;">Сигареты Chesterfield легкие</span>
<span style="top:426.7px;font-size:13px;line-height:16px;color:#000;left:724px;transform:scale(0.9127,1.09);transform-origin:0 12.3px;">0000000004</span>
<span style="top:426.7px;font-size:13px;line-height:16px;color:#000;left:823px;transform:scale(0.9165,1.09);transform-origin:0 12.3px;">5758686</span>
<span style="top:426.7px;font-size:13px;line-height:16px;color:#000;left:921.7px;transform:scale(0.9213,1.09);transform-origin:0 12.3px;">9900100000423</span>
<span style="top:448.0px;font-size:13px;line-height:16px;color:#000;left:412.6px;transform:scale(0.947,1.09);transform-origin:0 12.3px;">Сигареты Next лёгкие</span>
<span style="top:448.0px;font-size:13px;line-height:16px;color:#000;left:724px;transform:scale(0.9127,1.09);transform-origin:0 12.3px;">0000000077</span>
<span style="top:448.0px;font-size:13px;line-height:16px;color:#000;left:823px;transform:scale(0.922,1.09);transform-origin:0 12.3px;">647547575</span>
<span style="top:448.0px;font-size:13px;line-height:16px;color:#000;left:921.7px;transform:scale(0.9191,1.09);transform-origin:0 12.3px;">2500000000287</span>
<svg style="left:413.9px;top:545px" width="8.4" height="15" viewBox="0 0 8.4 15"><path d="M4.2 0 L8.4 8.3 H6.0 V15 H2.4 V8.3 H0 Z" fill="#0000ff"/></svg>
<svg style="left:441.8px;top:545.2px" width="8.4" height="15" viewBox="0 0 8.4 15"><path d="M2.4 0 H6.0 V6.9 H8.4 L4.2 15 L0 6.9 H2.4 Z" fill="#0000ff"/></svg>
<svg style="left:466.2px;top:542.8px" width="19" height="20" viewBox="0 0 19 20">
<text x="0.4" y="9.2" font-family="Liberation Serif" font-weight="bold" font-size="12.6" textLength="9.6" lengthAdjust="spacingAndGlyphs" fill="#2f6aa8">А</text>
<text x="0.4" y="18.3" font-family="Liberation Serif" font-weight="bold" font-size="12.6" textLength="9.6" lengthAdjust="spacingAndGlyphs" fill="#b03030">Я</text>
<path d="M13.6 2.6 V14" stroke="#2d3f5c" stroke-width="1.1"/><path d="M10.6 13.2 H16.6 L13.6 17.4 Z" fill="#2d3f5c"/></svg>
<svg style="left:493.8px;top:542.8px" width="19" height="20" viewBox="0 0 19 20">
<text x="0.4" y="9.2" font-family="Liberation Serif" font-weight="bold" font-size="12.6" textLength="9.6" lengthAdjust="spacingAndGlyphs" fill="#b03030">Я</text>
<text x="0.4" y="18.3" font-family="Liberation Serif" font-weight="bold" font-size="12.6" textLength="9.6" lengthAdjust="spacingAndGlyphs" fill="#2f6aa8">А</text>
<path d="M13.6 2.6 V14" stroke="#2d3f5c" stroke-width="1.1"/><path d="M10.6 13.2 H16.6 L13.6 17.4 Z" fill="#2d3f5c"/></svg>
<div style="left:517px;top:541px;width:1px;height:22px;background:linear-gradient(rgba(207,198,168,0),#cfc6a8 30%,#cfc6a8 70%,rgba(207,198,168,0))"></div>
<svg style="left:526px;top:544.2px" width="18" height="18" viewBox="0 0 18 18">
<path d="M11 11 L15.2 15.2" stroke="#b8987a" stroke-width="2.8" stroke-linecap="round"/>
<circle cx="7" cy="7" r="5.5" fill="#d9e8f7" stroke="#a3928a" stroke-width="1.3"/>
<ellipse cx="6" cy="5.5" rx="2.6" ry="2" fill="#fff" opacity="0.55"/></svg>
<span style="top:544.4px;font-size:13px;line-height:16px;color:#4b411f;left:544.7px;transform:scale(0.9053,1.09);transform-origin:0 12.3px;">Найти...</span>
<div style="left:594.5px;top:541px;width:1px;height:22px;background:linear-gradient(rgba(207,198,168,0),#cfc6a8 30%,#cfc6a8 70%,rgba(207,198,168,0))"></div>
<svg style="left:602px;top:543.7px" width="19" height="18" viewBox="0 0 19 18">
<path d="M11.5 11.5 L16.2 16" stroke="#cbbfb2" stroke-width="2.8" stroke-linecap="round"/>
<circle cx="7.6" cy="7.6" r="5.3" fill="#dbe2ea" stroke="#b9b6b8" stroke-width="1.3"/>
<path d="M1.6 1.8 L8.6 8.6 M7.2 1.6 L3 7" stroke="#b3adb0" stroke-width="1.7" stroke-linecap="round"/></svg>
<div style="left:625.5px;top:541px;width:1px;height:22px;background:linear-gradient(rgba(207,198,168,0),#cfc6a8 30%,#cfc6a8 70%,rgba(207,198,168,0))"></div>
<span style="top:544.4px;font-size:13px;line-height:16px;color:#4b411f;left:633px;transform:scale(0.9556,1.09);transform-origin:0 12.3px;">Изменить значения</span>
<div style="left:750.5px;top:541px;width:1px;height:22px;background:linear-gradient(rgba(207,198,168,0),#cfc6a8 30%,#cfc6a8 70%,rgba(207,198,168,0))"></div>
<span style="top:544.4px;font-size:13px;line-height:16px;color:#4b411f;left:758.5px;transform:scale(0.9571,1.09);transform-origin:0 12.3px;">Скрыть строки без количества</span>
<div style="left:406.5px;top:567.8px;width:668px;height:133.7px;background:#fff;border:1px solid #bdb698"></div>
<div style="left:407.5px;top:568.8px;width:649px;height:22.4px;background:#f5efdc"></div>
<div style="left:407.5px;top:591px;width:649px;height:1px;background:#bdb698"></div>
<div style="left:525px;top:568.8px;width:1px;height:91px;background:#bdb698"></div>
<div style="left:623.5px;top:568.8px;width:1px;height:91px;background:#bdb698"></div>
<div style="left:680.6px;top:568.8px;width:1px;height:91px;background:#bdb698"></div>
<div style="left:734.6px;top:568.8px;width:1px;height:91px;background:#bdb698"></div>
<div style="left:792.5px;top:568.8px;width:1px;height:91px;background:#bdb698"></div>
<div style="left:840px;top:568.8px;width:1px;height:91px;background:#bdb698"></div>
<div style="left:887.2px;top:568.8px;width:1px;height:91px;background:#bdb698"></div>
<div style="left:922px;top:568.8px;width:1px;height:91px;background:#bdb698"></div>
<div style="left:1013.6px;top:568.8px;width:1px;height:91px;background:#bdb698"></div>
<div style="left:407.5px;top:591.8px;width:649px;height:20.2px;background:#cde3fb"></div>
<div style="left:407.5px;top:591.8px;width:118.5px;height:20.2px;background:#6f9acd"></div>
<div style="left:525px;top:591.8px;width:1px;height:20.2px;background:#c7c3a6"></div>
<div style="left:623.5px;top:591.8px;width:1px;height:20.2px;background:#c7c3a6"></div>
<div style="left:680.6px;top:591.8px;width:1px;height:20.2px;background:#c7c3a6"></div>
<div style="left:734.6px;top:591.8px;width:1px;height:20.2px;background:#c7c3a6"></div>
<div style="left:792.5px;top:591.8px;width:1px;height:20.2px;background:#c7c3a6"></div>
<div style="left:840px;top:591.8px;width:1px;height:20.2px;background:#c7c3a6"></div>
<div style="left:887.2px;top:591.8px;width:1px;height:20.2px;background:#c7c3a6"></div>
<div style="left:922px;top:591.8px;width:1px;height:20.2px;background:#c7c3a6"></div>
<div style="left:1013.6px;top:591.8px;width:1px;height:20.2px;background:#c7c3a6"></div>
<div style="left:407.5px;top:612px;width:649px;height:1px;background:#bdb698"></div>
<div style="left:407.5px;top:633.2px;width:649px;height:1px;background:#bdb698"></div>
<div style="left:407.5px;top:654.3px;width:649px;height:1px;background:#bdb698"></div>
<div style="left:407.5px;top:659.6px;width:649px;height:23.4px;background:#f5efdc"></div>
<div style="left:407.5px;top:659.2px;width:649px;height:1px;background:#bdb698"></div>
<div style="left:525px;top:659.6px;width:1px;height:23.4px;background:#bdb698"></div>
<div style="left:623.5px;top:659.6px;width:1px;height:23.4px;background:#bdb698"></div>
<div style="left:680.6px;top:659.6px;width:1px;height:23.4px;background:#bdb698"></div>
<div style="left:734.6px;top:659.6px;width:1px;height:23.4px;background:#bdb698"></div>
<div style="left:792.5px;top:659.6px;width:1px;height:23.4px;background:#bdb698"></div>
<div style="left:840px;top:659.6px;width:1px;height:23.4px;background:#bdb698"></div>
<div style="left:887.2px;top:659.6px;width:1px;height:23.4px;background:#bdb698"></div>
<div style="left:922px;top:659.6px;width:1px;height:23.4px;background:#bdb698"></div>
<div style="left:1013.6px;top:659.6px;width:1px;height:23.4px;background:#bdb698"></div>
<div style="left:1056px;top:568.8px;width:1px;height:132px;background:#bdb698"></div>
<div style="left:1057px;top:568.8px;width:16.5px;height:114px;background:#f8f8f8"></div>
<div style="left:1057px;top:568.8px;width:16.5px;height:22.4px;background:linear-gradient(90deg,#fbf9f1,#efe8d0);"></div>
<svg style="left:1060.7px;top:575.5px" width="9" height="8" viewBox="0 0 9 8"><polygon points="0.3,7.8 8.7,7.8 4.5,0.2" fill="#c8c8c8"/></svg>
<div style="left:1057px;top:591.4px;width:16.5px;height:32.6px;background:linear-gradient(90deg,#fbf9f1,#efe8d0);border-top:1px solid #ddd5b8;border-bottom:1px solid #ddd5b8"></div>
<svg style="left:1062px;top:605px" width="6" height="6" viewBox="0 0 6 6"><path d="M4.6 1.6 A2 2 0 1 0 4.6 4.4" fill="none" stroke="#d8d2c0" stroke-width="1.2"/></svg>
<div style="left:1057px;top:659.6px;width:16.5px;height:23.4px;background:linear-gradient(90deg,#fbf9f1,#efe8d0);border-top:1px solid #ddd5b8"></div>
<svg style="left:1060.7px;top:667.8px" width="9" height="8" viewBox="0 0 9 8"><polygon points="0.3,0.2 8.7,0.2 4.5,7.8" fill="#8c8c8c"/></svg>
<div style="left:407.5px;top:684px;width:649px;height:16.8px;background:#f8f8f8"></div>
<div style="left:407.5px;top:684px;width:23.5px;height:16.8px;background:linear-gradient(#fbf9f1,#efe8d0);border-right:1px solid #cfc6a5"></div>
<svg style="left:414px;top:687.8px" width="8" height="9" viewBox="0 0 8 9"><polygon points="7.8,0.3 7.8,8.7 0.2,4.5" fill="#c8c2bb"/></svg>
<div style="left:431px;top:684px;width:200.8px;height:16.8px;background:linear-gradient(#fbf9f1,#efe8d0);border-right:1px solid #ddd5b8"></div>
<svg style="left:528px;top:689px" width="6" height="6" viewBox="0 0 6 6"><path d="M4.6 1.6 A2 2 0 1 0 4.6 4.4" fill="none" stroke="#d8d2c0" stroke-width="1.2"/></svg>
<div style="left:1033px;top:684px;width:23px;height:16.8px;background:linear-gradient(#fbf9f1,#efe8d0);border-left:1px solid #ddd5b8"></div>
<svg style="left:1041px;top:687.8px" width="8" height="9" viewBox="0 0 8 9"><polygon points="0.2,0.3 0.2,8.7 7.8,4.5" fill="#8c8c8c"/></svg>
<div style="left:1057px;top:684px;width:16.5px;height:16.8px;background:#f8f8f8"></div>
<div style="left:407.5px;top:683px;width:666px;height:1px;background:#bdb698"></div>
<div style="left:406.5px;top:567.8px;width:668px;height:133.7px;border:1px solid #bdb698"></div>
<span style="top:572.4px;font-size:13px;line-height:16px;color:#5e4c20;left:412.7px;transform:scale(0.8519,1.09);transform-origin:0 12.3px;">N</span>
<span style="top:572.4px;font-size:13px;line-height:16px;color:#5e4c20;left:531.5px;transform:scale(0.8028,1.09);transform-origin:0 12.3px;">СЕ</span>
<span style="top:572.4px;font-size:13px;line-height:16px;color:#5e4c20;left:630px;transform:scale(0.9297,1.09);transform-origin:0 12.3px;">Ед. изм.</span>
<span style="top:572.4px;font-size:13px;line-height:16px;color:#5e4c20;left:686.4px;transform:scale(0.9063,1.09);transform-origin:0 12.3px;">Коэф.</span>
<span style="top:572.4px;font-size:13px;line-height:16px;color:#5e4c20;left:741px;transform:scale(0.9277,1.09);transform-origin:0 12.3px;">Кол-во</span>
<span style="top:572.4px;font-size:13px;line-height:16px;color:#5e4c20;left:798.5px;transform:scale(0.9115,1.09);transform-origin:0 12.3px;">Цена</span>
<span style="top:572.4px;font-size:13px;line-height:16px;color:#5e4c20;left:846px;transform:scale(0.9251,1.09);transform-origin:0 12.3px;">Сумма</span>
<span style="top:572.4px;font-size:13px;line-height:16px;color:#5e4c20;left:893px;transform:scale(0.856,1.09);transform-origin:0 12.3px;">Ос...</span>
<span style="top:572.4px;font-size:13px;line-height:16px;color:#5e4c20;left:928px;transform:scale(1.0035,1.09);transform-origin:0 12.3px;">Уже заказано</span>
<div style="left:1015px;top:568.8px;width:41px;height:22.4px;overflow:hidden;background:transparent"></div>
<div style="left:1015px;top:568.8px;width:41px;height:22px;overflow:hidden">
<span style="top:3.6px;font-size:13px;line-height:16px;color:#5e4c20;left:4.3px;transform:scale(0.8881,1.09);transform-origin:0 12.3px;">Количество</span>
</div>
<span style="top:595.0px;font-size:13px;line-height:16px;color:#fff;right:913px;transform:scale(0.7603,1.09);transform-origin:100% 12.3px;">1</span>
<span style="top:595.0px;font-size:13px;line-height:16px;color:#000;left:531.2px;transform:scale(0.9322,1.09);transform-origin:0 12.3px;">Кулинария</span>
<span style="top:595.0px;font-size:13px;line-height:16px;color:#000;left:630px;transform:scale(0.8541,1.09);transform-origin:0 12.3px;">шт</span>
<span style="top:595.0px;font-size:13px;line-height:16px;color:#000;right:701.8px;transform:scale(0.931,1.09);transform-origin:100% 12.3px;">1,000</span>
<span style="top:595.0px;font-size:13px;line-height:16px;color:#000;right:423.8px;transform:scale(0.9149,1.09);transform-origin:100% 12.3px;">100,000</span>
<span style="top:616.1px;font-size:13px;line-height:16px;color:#000;right:913px;transform:scale(0.7603,1.09);transform-origin:100% 12.3px;">2</span>
<span style="top:616.1px;font-size:13px;line-height:16px;color:#000;left:531.2px;transform:scale(0.973,1.09);transform-origin:0 12.3px;">Магазин</span>
<span style="top:616.1px;font-size:13px;line-height:16px;color:#000;left:630px;transform:scale(0.8541,1.09);transform-origin:0 12.3px;">шт</span>
<span style="top:616.1px;font-size:13px;line-height:16px;color:#000;right:701.8px;transform:scale(0.931,1.09);transform-origin:100% 12.3px;">1,000</span>
<span style="top:616.1px;font-size:13px;line-height:16px;color:#000;right:423.8px;transform:scale(0.9149,1.09);transform-origin:100% 12.3px;">100,000</span>
<span style="top:637.2px;font-size:13px;line-height:16px;color:#000;right:913px;transform:scale(0.7603,1.09);transform-origin:100% 12.3px;">3</span>
<span style="top:637.2px;font-size:13px;line-height:16px;color:#000;left:531.2px;transform:scale(0.9411,1.09);transform-origin:0 12.3px;">Распределит...</span>
<span style="top:637.2px;font-size:13px;line-height:16px;color:#000;left:630px;transform:scale(0.8541,1.09);transform-origin:0 12.3px;">шт</span>
<span style="top:637.2px;font-size:13px;line-height:16px;color:#000;right:701.8px;transform:scale(0.931,1.09);transform-origin:100% 12.3px;">1,000</span>
<span style="top:637.2px;font-size:13px;line-height:16px;color:#000;right:423.8px;transform:scale(0.9149,1.09);transform-origin:100% 12.3px;">100,000</span>
<div style="left:1106.3px;top:53.8px;width:312px;height:627px;background:#fdf5ee;border:1px solid #cdc5a5"></div>
<div style="left:1173px;top:34.4px;width:131.3px;height:20px;background:#ece6cf;border:1px solid #cdc5a5;border-bottom:none;border-radius:6px 6px 0 0"></div>
<div style="left:1310.6px;top:34.4px;width:65.5px;height:20px;background:#ece6cf;border:1px solid #cdc5a5;border-bottom:none;border-radius:6px 6px 0 0"></div>
<div style="left:1106.3px;top:34.3px;width:60.2px;height:21px;background:#fdf5ee;border:1px solid #cdc5a5;border-bottom:none;border-radius:5px 5px 0 0;border-top:2px solid #efd9a0"></div>
<span style="top:37.6px;font-size:13px;line-height:16px;color:#5e4c20;left:1117.6px;transform:scale(0.9043,1.09);transform-origin:0 12.3px;">Расчет</span>
<span style="top:37.6px;font-size:13px;line-height:16px;color:#5e4c20;left:1184.6px;transform:scale(0.9512,1.09);transform-origin:0 12.3px;">Продажи и остатки</span>
<span style="top:37.6px;font-size:13px;line-height:16px;color:#5e4c20;left:1323px;transform:scale(0.9781,1.09);transform-origin:0 12.3px;">Заказы</span>
<div style="left:1115.5px;top:66px;width:239.5px;height:605.3px;background:#fdf5ee;border:1px solid #c9be98;box-shadow:inset 0 0 0 1px #fff"></div>
<div style="left:1119.3px;top:69.5px;width:1px;height:14px;background:#000"></div>
<span style="top:70.23px;font-size:12px;line-height:15px;color:#000;left:1119.7px;transform:scale(1.0022,1.09);transform-origin:0 11.47px;">Способ расчета количества -</span>
<span style="top:84.62px;font-size:12px;line-height:15px;color:#000;left:1119.7px;transform:scale(1.0484,1.09);transform-origin:0 11.47px;">"Минимум-максимум"</span>
<span style="top:113.4px;font-size:12px;line-height:15px;color:#000;left:1119.7px;transform:scale(1.0233,1.09);transform-origin:0 11.47px;">График заказа - Каждый 1 день от</span>
<span style="top:127.79px;font-size:12px;line-height:15px;color:#000;left:1119.7px;transform:scale(0.9778,1.09);transform-origin:0 11.47px;">25.06.2018.</span>
<span style="top:142.18px;font-size:12px;line-height:15px;color:#000;left:1119.7px;transform:scale(1.0013,1.09);transform-origin:0 11.47px;">Остаток - 100 (включая величину</span>
<span style="top:156.57px;font-size:12px;line-height:15px;color:#000;left:1119.7px;transform:scale(1.0285,1.09);transform-origin:0 11.47px;">невыполненного заказа: 100)</span>
<span style="top:170.96px;font-size:12px;line-height:15px;color:#000;left:1119.7px;transform:scale(1.0027,1.09);transform-origin:0 11.47px;">Минимум - 50  (включая страховой</span>
<span style="top:185.35px;font-size:12px;line-height:15px;color:#000;left:1119.7px;transform:scale(1.0214,1.09);transform-origin:0 11.47px;">запас)</span>
<span style="top:199.74px;font-size:12px;line-height:15px;color:#000;left:1132.8px;transform:scale(1.0022,1.09);transform-origin:0 11.47px;">Страховой запас - 20 (включая</span>
<span style="top:214.13px;font-size:12px;line-height:15px;color:#000;left:1119.7px;transform:scale(1.017,1.09);transform-origin:0 11.47px;">товары в резерве: 0)</span>
<span style="top:228.52px;font-size:12px;line-height:15px;color:#000;left:1132.8px;transform:scale(1.0166,1.09);transform-origin:0 11.47px;">Минимум по параметрам СУЗ - 50</span>
<span style="top:242.91px;font-size:12px;line-height:15px;color:#000;left:1119.7px;transform:scale(1.0161,1.09);transform-origin:0 11.47px;">Максимум - 100</span>
<span style="top:257.3px;font-size:12px;line-height:15px;color:#000;left:1119.7px;transform:scale(1.0103,1.09);transform-origin:0 11.47px;">Дата окончания периода потребности -</span>
<span style="top:271.69px;font-size:12px;line-height:15px;color:#000;left:1119.7px;transform:scale(0.9623,1.09);transform-origin:0 11.47px;">14.08.2021</span>
<span style="top:286.08px;font-size:12px;line-height:15px;color:#000;left:1126.7px;transform:scale(1.0063,1.09);transform-origin:0 11.47px;">Дата следующей поставки - 15.08.2021</span>
<span style="top:300.47px;font-size:12px;line-height:15px;color:#000;left:1132.8px;transform:scale(1.0286,1.09);transform-origin:0 11.47px;">Срок выполнения заказа по договору</span>
<span style="top:314.86px;font-size:12px;line-height:15px;color:#000;left:1119.7px;transform:scale(0.8562,1.09);transform-origin:0 11.47px;">- 0</span>
<span style="top:329.25px;font-size:12px;line-height:15px;color:#000;left:1125.8px;transform:scale(1.0062,1.09);transform-origin:0 11.47px;">Страховой запас в днях продаж - 0</span>
<span style="top:343.64px;font-size:12px;line-height:15px;color:#000;left:1119.7px;transform:scale(1.009,1.09);transform-origin:0 11.47px;">Продажи за период потребности - 0</span>
<span style="top:358.03px;font-size:12px;line-height:15px;color:#000;left:1132.8px;transform:scale(1.0164,1.09);transform-origin:0 11.47px;">Продажи за период до этой</span>
<span style="top:372.42px;font-size:12px;line-height:15px;color:#000;left:1119.7px;transform:scale(1.0288,1.09);transform-origin:0 11.47px;">поставки: 0</span>
<span style="top:386.81px;font-size:12px;line-height:15px;color:#000;left:1146.1px;transform:scale(1.0085,1.09);transform-origin:0 11.47px;">Собственные продажи: 0</span>
<span style="top:401.2px;font-size:12px;line-height:15px;color:#000;left:1146.1px;transform:scale(1.0376,1.09);transform-origin:0 11.47px;">Потребность магазинов,</span>
<span style="top:415.59px;font-size:12px;line-height:15px;color:#000;left:1119.7px;transform:scale(0.9994,1.09);transform-origin:0 11.47px;">подпитывающихся с данной СЕ: 0</span>
<span style="top:429.98px;font-size:12px;line-height:15px;color:#000;left:1119.7px;transform:scale(1.0175,1.09);transform-origin:0 11.47px;">Процент заказа - 100</span>
<span style="top:444.37px;font-size:12px;line-height:15px;color:#000;left:1119.7px;transform:scale(1.0394,1.09);transform-origin:0 11.47px;">Размер заказа - 0</span>
<span style="top:458.76px;font-size:12px;line-height:15px;color:#000;left:1119.7px;transform:scale(1.033,1.09);transform-origin:0 11.47px;">Условие расчета заказа - если</span>
<span style="top:473.15px;font-size:12px;line-height:15px;color:#000;left:1119.7px;transform:scale(1.0432,1.09);transform-origin:0 11.47px;">"Остаток" - "Минимум" &lt;= "Продажи за</span>
<span style="top:487.54px;font-size:12px;line-height:15px;color:#000;left:1119.7px;transform:scale(1.0166,1.09);transform-origin:0 11.47px;">период потребности"</span>
<span style="top:501.93px;font-size:12px;line-height:15px;color:#000;left:1119.7px;transform:scale(1.0609,1.09);transform-origin:0 11.47px;">то заказ равен "Максимум" - "Остаток"</span>
<span style="top:516.32px;font-size:12px;line-height:15px;color:#000;left:1119.7px;transform:scale(1.0339,1.09);transform-origin:0 11.47px;">+ "Продажи до этой поставки",</span>
<span style="top:530.71px;font-size:12px;line-height:15px;color:#000;left:1119.7px;transform:scale(1.0226,1.09);transform-origin:0 11.47px;">иначе заказ равен 0</span>
<span style="top:545.1px;font-size:12px;line-height:15px;color:#000;left:1119.7px;transform:scale(1.0136,1.09);transform-origin:0 11.47px;">Округление настроено, но потребность</span>
<span style="top:559.49px;font-size:12px;line-height:15px;color:#000;left:1119.7px;transform:scale(1.0057,1.09);transform-origin:0 11.47px;">не попала ни в один диапазон</span>
<span style="top:573.88px;font-size:12px;line-height:15px;color:#000;left:1119.7px;transform:scale(1.0073,1.09);transform-origin:0 11.47px;">округления:</span>
<span style="top:588.27px;font-size:12px;line-height:15px;color:#000;left:1132.8px;transform:scale(1.0167,1.09);transform-origin:0 11.47px;">Вариант округления: В базовых</span>
<span style="top:602.66px;font-size:12px;line-height:15px;color:#000;left:1119.7px;transform:scale(0.9604,1.09);transform-origin:0 11.47px;">единицах</span>
<span style="top:617.05px;font-size:12px;line-height:15px;color:#000;left:1132.8px;transform:scale(1.0095,1.09);transform-origin:0 11.47px;">базовой единицы</span>
<span style="top:631.44px;font-size:12px;line-height:15px;color:#000;left:1132.8px;transform:scale(1.0053,1.09);transform-origin:0 11.47px;">Потребность = 0</span>
<span style="top:693.03px;font-size:12px;line-height:15px;color:#4b411f;left:1106px;transform:scale(1.0006,1.09);transform-origin:0 11.47px;">Сигареты Chesterfield легкие</span>
<div style="left:1367.4px;top:710.8px;width:2px;height:2px;background:#b4ae9c"></div>
<div style="left:1363px;top:710.8px;width:2px;height:2px;background:#b4ae9c"></div>
<div style="left:1358.6px;top:710.8px;width:2px;height:2px;background:#b4ae9c"></div>
<div style="left:1367.4px;top:706.5px;width:2px;height:2px;background:#b4ae9c"></div>
<div style="left:1363px;top:706.5px;width:2px;height:2px;background:#b4ae9c"></div>
<div style="left:1367.4px;top:702.2px;width:2px;height:2px;background:#b4ae9c"></div>
<svg style="left:350px;top:265px" width="56" height="56" viewBox="0 0 56 56"><g transform="translate(0.75,0.3)">
<circle cx="27.2" cy="27.6" r="21.7" fill="#000" opacity="0.18"/>
<circle cx="26.8" cy="27.2" r="21.7" fill="#000" opacity="0.12"/>
<circle cx="26" cy="26" r="21.7" fill="#d86445"/>
<path transform="translate(21.0,33.2)" d="M7.4 0 V-15.8 H4.9 C4.3 -14 2.6 -12.5 0.6 -11.8 V-9 C2 -9.5 3.2 -10.2 4 -11 V0 Z" fill="#fff"/></g></svg>
<svg style="left:210px;top:488px" width="56" height="56" viewBox="0 0 56 56"><g transform="translate(0,0)">
<circle cx="27.2" cy="27.6" r="21.7" fill="#000" opacity="0.18"/>
<circle cx="26.8" cy="27.2" r="21.7" fill="#000" opacity="0.12"/>
<circle cx="26" cy="26" r="21.7" fill="#d86445"/>
<text transform="translate(26.4,33.3) scale(0.9,1)" font-family="Liberation Sans" font-weight="bold" font-size="22.5" text-anchor="middle" fill="#fff">2</text></g></svg>
<svg style="left:641px;top:433px" width="56" height="56" viewBox="0 0 56 56"><g transform="translate(0.5,0.8)">
<circle cx="27.2" cy="27.6" r="21.7" fill="#000" opacity="0.18"/>
<circle cx="26.8" cy="27.2" r="21.7" fill="#000" opacity="0.12"/>
<circle cx="26" cy="26" r="21.7" fill="#d86445"/>
<text transform="translate(26.4,33.3) scale(0.9,1)" font-family="Liberation Sans" font-weight="bold" font-size="22.5" text-anchor="middle" fill="#fff">3</text></g></svg>
<svg style="left:774px;top:593px" width="56" height="56" viewBox="0 0 56 56"><g transform="translate(0.6,0.6)">
<circle cx="27.2" cy="27.6" r="21.7" fill="#000" opacity="0.18"/>
<circle cx="26.8" cy="27.2" r="21.7" fill="#000" opacity="0.12"/>
<circle cx="26" cy="26" r="21.7" fill="#d86445"/>
<text transform="translate(26.4,33.3) scale(0.9,1)" font-family="Liberation Sans" font-weight="bold" font-size="22.5" text-anchor="middle" fill="#fff">4</text></g></svg>
<svg style="left:1291px;top:607px" width="56" height="56" viewBox="0 0 56 56"><g transform="translate(0.6,0.3)">
<circle cx="27.2" cy="27.6" r="21.7" fill="#000" opacity="0.18"/>
<circle cx="26.8" cy="27.2" r="21.7" fill="#000" opacity="0.12"/>
<circle cx="26" cy="26" r="21.7" fill="#d86445"/>
<text transform="translate(26.4,33.3) scale(0.9,1)" font-family="Liberation Sans" font-weight="bold" font-size="22.5" text-anchor="middle" fill="#fff">5</text></g></svg>
</div>
</body></html>
